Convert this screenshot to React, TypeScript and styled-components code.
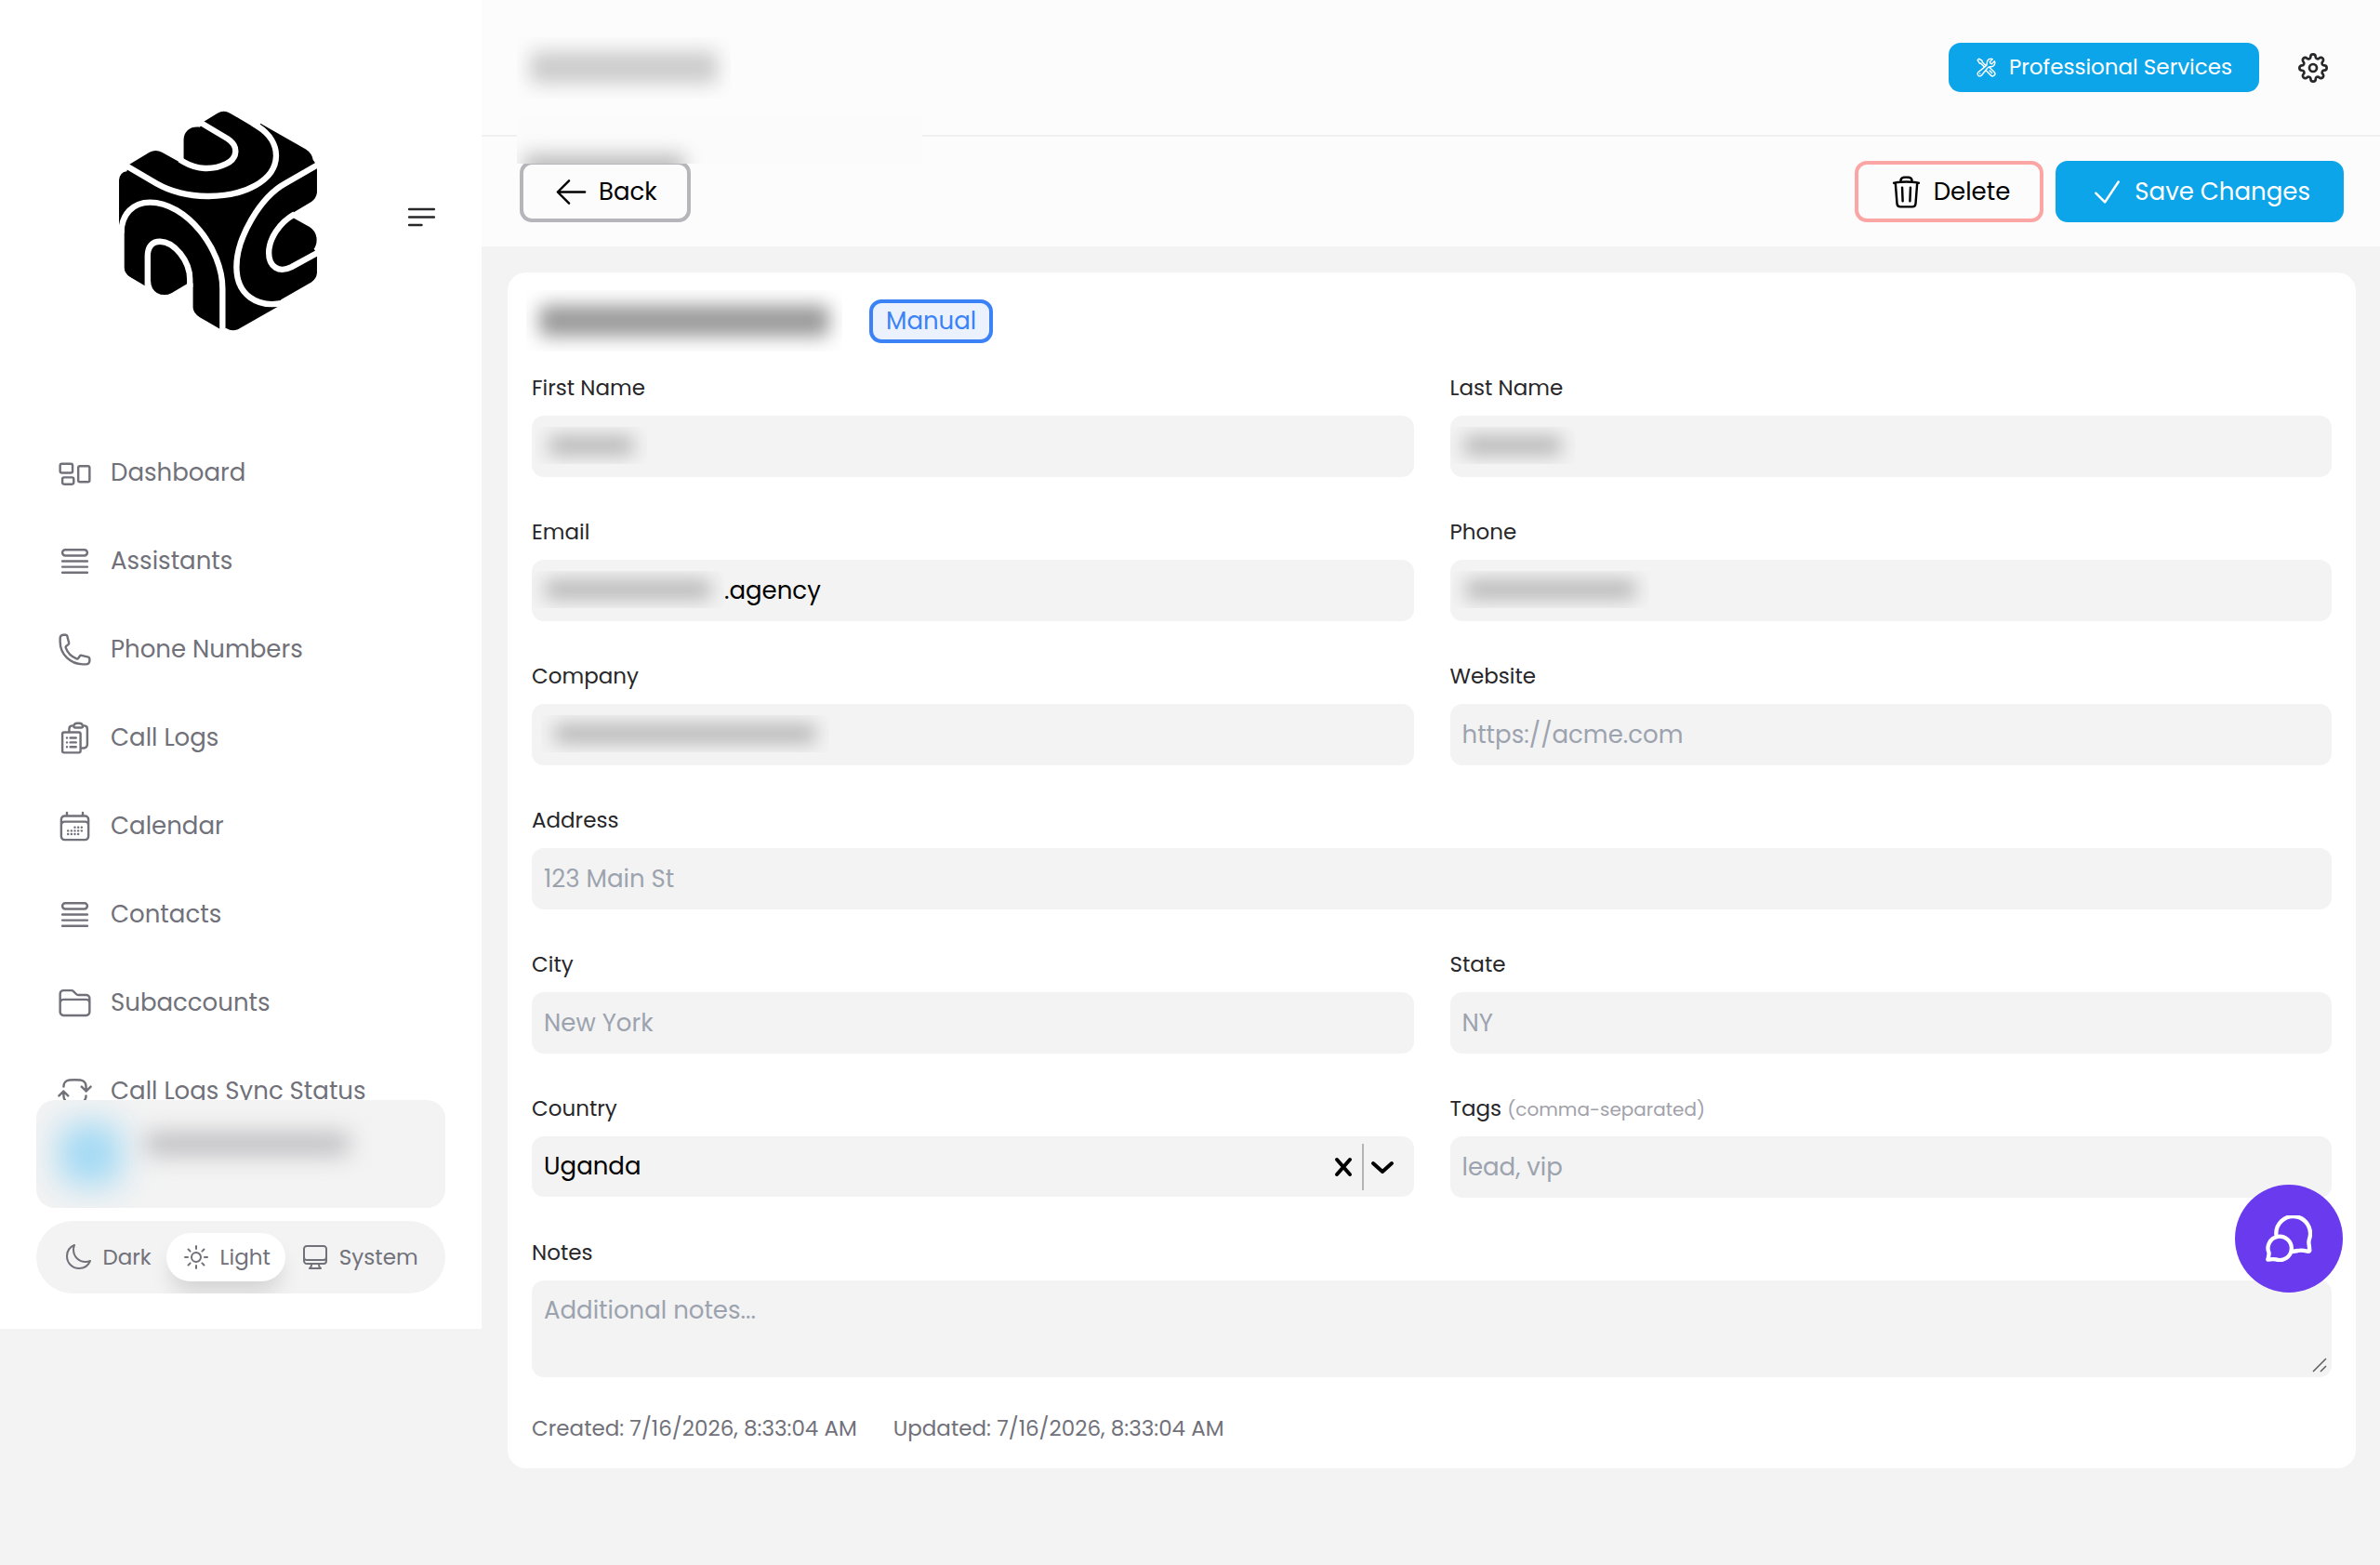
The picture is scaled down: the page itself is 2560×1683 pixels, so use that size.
import React, { useState } from 'react';
import styled, { createGlobalStyle } from 'styled-components';
import {
  HiOutlineArrowLeft,
  HiOutlineArrowPathRoundedSquare,
  HiOutlineBars3BottomLeft,
  HiOutlineCalendarDays,
  HiOutlineCheck,
  HiOutlineClipboardDocumentList,
  HiOutlineComputerDesktop,
  HiOutlineFolder,
  HiOutlineMoon,
  HiOutlinePhone,
  HiOutlineQueueList,
  HiOutlineRectangleGroup,
  HiOutlineSun,
  HiOutlineTrash,
  HiOutlineWrenchScrewdriver,
} from 'react-icons/hi2';
import { FiSettings } from 'react-icons/fi';

const color = {
  page: '#f3f3f3',
  bar: '#fcfcfc',
  white: '#ffffff',
  line: '#f0f0f0',
  text: '#27272a',
  muted: '#71717a',
  faint: '#a1a1aa',
  placeholder: '#9ca3af',
  primary: '#0ca5e9',
  danger: '#fca5a5',
  badge: '#3b82f6',
  chat: '#6a3aef',
};

const GlobalStyle = createGlobalStyle`
  *, *::before, *::after { box-sizing: border-box; }
  body {
    margin: 0;
    background: ${color.page};
    color: ${color.text};
    font-family: Poppins, Inter, sans-serif;
    font-size: 26px;
    line-height: 39px;
  }
  button, input, select, textarea { font: inherit; color: inherit; }
  button { cursor: pointer; }
`;

const Shell = styled.div`
  display: flex;
  align-items: flex-start;
  min-height: 100vh;
`;

/* ---------- sidebar ---------- */

const Sidebar = styled.aside`
  flex: 0 0 518px;
  background: ${color.white};
`;

const SidebarHead = styled.div`
  display: flex;
  align-items: center;
  justify-content: space-between;
  padding: 119px 45px 105px 128px;
`;

const Logo = styled.svg`
  display: block;
  width: 213px;
  height: 237px;
`;

const IconButton = styled.button`
  display: flex;
  padding: 0;
  border: 0;
  background: none;
  color: ${color.text};
`;

const MenuButton = styled(IconButton)`
  padding-bottom: 8px;
`;

const Nav = styled.nav`
  max-height: 722px;
  overflow: hidden;
`;

const NavLink = styled.a`
  display: flex;
  align-items: center;
  gap: 19px;
  height: 95px;
  padding-left: 61px;
  color: ${color.muted};
  text-decoration: none;
`;

const SidebarFoot = styled.div`
  display: grid;
  gap: 14px;
  padding: 0 39px 38px;
`;

const UserCard = styled.div`
  display: flex;
  gap: 26px;
  height: 116px;
  padding: 25px;
  border-radius: 20px;
  background: ${color.page};
  overflow: hidden;
`;

const BlurredAvatar = styled.div`
  width: 66px;
  height: 66px;
  border-radius: 16px;
  background: #9fd8f4;
  filter: blur(18px);
`;

const BlurredName = styled.div`
  width: 220px;
  height: 24px;
  margin-top: 10px;
  border-radius: 8px;
  background: #bdbdc1;
  filter: blur(12px);
`;

const ThemeSwitch = styled.div`
  display: flex;
  align-items: center;
  justify-content: center;
  height: 78px;
  padding: 0 13px;
  border-radius: 39px;
  background: ${color.page};
  overflow: hidden;
`;

const ThemeOption = styled.button<{ $active: boolean }>`
  display: flex;
  align-items: center;
  gap: 10px;
  height: 52px;
  padding: 0 16px;
  border: 0;
  border-radius: 26px;
  background: ${(p) => (p.$active ? color.white : 'transparent')};
  box-shadow: ${(p) => (p.$active ? '0 16px 24px -5px rgba(0, 0, 0, 0.14)' : 'none')};
  color: ${color.muted};
  font-size: 23px;
`;

/* ---------- main column ---------- */

const Main = styled.main`
  flex: 1;
  min-width: 0;
`;

const TopBar = styled.header`
  display: flex;
  align-items: center;
  justify-content: space-between;
  height: 147px;
  padding: 0 56px 0 38px;
  border-bottom: 2px solid ${color.line};
  background: ${color.bar};
`;

const TopActions = styled.div`
  display: flex;
  align-items: center;
  gap: 42px;
`;

const ServicesButton = styled.button`
  display: flex;
  align-items: center;
  gap: 13px;
  height: 53px;
  padding: 0 29px;
  border: 0;
  border-radius: 13px;
  background: ${color.primary};
  color: ${color.white};
  font-size: 23px;
`;

const Toolbar = styled.div`
  position: relative;
  display: flex;
  align-items: center;
  justify-content: space-between;
  height: 118px;
  padding: 0 39px 0 41px;
  background: ${color.bar};
`;

const SubtitleSmudge = styled.div`
  position: absolute;
  left: 38px;
  top: -22px;
  width: 436px;
  height: 51px;
  background: #fbfbfb;
  overflow: hidden;

  &::after {
    content: '';
    position: absolute;
    left: 8px;
    bottom: -16px;
    width: 172px;
    height: 26px;
    background: #bcbcbc;
    filter: blur(10px);
  }
`;

const ButtonGroup = styled.div`
  display: flex;
  gap: 13px;
`;

const ActionButton = styled.button<{ $tone: 'neutral' | 'danger' | 'primary' }>`
  display: flex;
  align-items: center;
  gap: 10px;
  height: 66px;
  padding: 0 32px;
  border: 4px solid
    ${(p) => ({ neutral: '#b5b5ba', danger: color.danger, primary: color.primary })[p.$tone]};
  border-radius: 13px;
  background: ${(p) => (p.$tone === 'primary' ? color.primary : 'transparent')};
  color: ${(p) => (p.$tone === 'primary' ? color.white : '#000000')};
`;

/* ---------- contact card ---------- */

const Card = styled.form`
  position: relative;
  margin: 28px 26px 28px 28px;
  padding: 26px;
  border-radius: 20px;
  background: ${color.white};
`;

const TitleRow = styled.div`
  display: flex;
  align-items: center;
  gap: 29px;
  height: 52px;
  margin-bottom: 29px;
`;

const Badge = styled.span`
  padding: 0 14px;
  border: 4px solid ${color.badge};
  border-radius: 13px;
  background: #ebf2fe;
  color: ${color.badge};
`;

const Grid = styled.div`
  display: grid;
  grid-template-columns: 1fr 1fr;
  gap: 42px 39px;
`;

const FieldBox = styled.div<{ $wide?: boolean }>`
  grid-column: ${(p) => (p.$wide ? '1 / -1' : 'auto')};
  display: flex;
  flex-direction: column;
  gap: 13px;
`;

const Label = styled.label`
  font-size: 23px;
  line-height: 34px;
`;

const Hint = styled.span`
  color: ${color.faint};
  font-size: 20px;
  line-height: 20px;
`;

const InputWrap = styled.div`
  position: relative;
  display: flex;
`;

const Input = styled.input<{ $indent?: number }>`
  width: 100%;
  height: 66px;
  padding: 0 13px 0 ${(p) => p.$indent ?? 13}px;
  border: 0;
  border-radius: 13px;
  background: ${color.page};
  color: #000000;
  &::placeholder { color: ${color.placeholder}; opacity: 1; }
`;

const TextArea = styled.textarea`
  display: block;
  width: 100%;
  height: 104px;
  padding: 13px;
  border: 0;
  border-radius: 13px;
  background: ${color.page};
  color: #000000;
  resize: none;
  &::placeholder { color: ${color.placeholder}; opacity: 1; }
`;

const ResizeGrip = styled.svg`
  position: absolute;
  right: 5px;
  bottom: 5px;
`;

const SelectWrap = styled.div`
  display: flex;
  align-items: center;
  height: 65px;
  padding: 0 18px 0 0;
  border-radius: 13px;
  background: ${color.page};
  color: #000000;
`;

const Select = styled.select`
  flex: 1;
  height: 65px;
  padding: 0 13px;
  border: 0;
  border-radius: 13px;
  background: transparent;
  appearance: none;
`;

const ClearButton = styled.button`
  display: flex;
  padding: 6px 10px;
  border: 0;
  background: none;
`;

const Separator = styled.span`
  width: 2px;
  height: 50px;
  background: #b3b3b8;
`;

const Chevron = styled.svg`
  display: block;
  margin-left: 4px;
`;

const Smudge = styled.span<{ $width: number; $height: number }>`
  display: block;
  position: relative;
  width: ${(p) => p.$width}px;
  height: ${(p) => p.$height}px;
  overflow: hidden;

  &::after {
    content: '';
    position: absolute;
    inset: 24% 14px;
    border-radius: 6px;
    background: var(--ink, #b4b4b4);
    filter: blur(10px);
  }
`;

const Heading = styled.h1`
  margin: 0 0 0 -6px;
  --ink: #9a9a9a;
`;

const PageTitle = styled.div`
  --ink: #cccccc;
`;

const FieldSmudge = styled(Smudge)<{ $left: number }>`
  position: absolute;
  left: ${(p) => p.$left}px;
  top: 12px;
  pointer-events: none;
`;

const Dates = styled.div`
  display: flex;
  gap: 39px;
  margin-top: 38px;
  color: ${color.muted};
  font-size: 23px;
  line-height: 34px;
`;

const ChatButton = styled.button`
  position: absolute;
  right: 14px;
  bottom: 189px;
  display: grid;
  place-items: center;
  width: 116px;
  height: 116px;
  padding: 0;
  border: 0;
  border-radius: 50%;
  background: ${color.chat};
`;

function BrandLogo() {
  return (
    <Logo viewBox="85 57 637 709" role="img" aria-label="Logo">
      <path
        fill="#000"
        d="M115 232 L183 191 Q203 181 223 191 L293 230 V150 C294 120 318 106 345 110 L357 93 L402 65
           Q422 53 442 65 L535 120 L540 98 L686 181 Q706 194 709 215 L722 234 V320 Q720 338 704 350
           L640 388 L648 403 L698 431 Q721 446 721 472 Q721 490 712 502 L722 516 V580 Q720 598 704 609
           L606 665 L604 683 L470 759 Q450 770 430 757 L411 760 L345 722 Q323 708 323 690 V612 L304 614
           L255 643 Q231 656 207 643 Q187 630 187 605 L168 620 L120 592 Q102 580 102 562 V440 H85 V280
           Q88 254 110 252 Z"
      />
      <g fill="none" stroke="#fff" strokeWidth="19">
        <path d="M340 91 L434 147 C470 170 468 210 430 228 C385 250 335 246 295 223 L280 214" />
        <path d="M98 228 L205 291 C300 345 440 345 525 297 C612 248 610 158 532 108 L515 97" />
        <path d="M735 225 L620 291 C540 335 463 465 463 560 C463 650 530 692 612 676" />
        <path d="M735 508 L640 560 C600 580 567 560 567 515 C567 470 600 418 650 390" />
        <path d="M92 452 C92 390 130 352 185 352 C300 352 418 500 418 630 V775" />
        <path d="M177 635 V525 C177 490 195 478 217 478 C262 478 313 540 313 600 V625" />
      </g>
    </Logo>
  );
}

function ChatIcon() {
  return (
    <svg width="50" height="50" viewBox="228 201 150 150" fill="none" stroke="#fff" strokeWidth="13" strokeLinecap="round" strokeLinejoin="round">
      <path d="M262 262 A55 55 0 1 1 369 277 Q366 286 368 296 L370 312 Q371 318 363 317 Q343 312 332 315 L313 318" />
      <path d="M239 323 A38 38 0 1 1 261 343 Q250 341 235 344 Q238 333 239 323 Z" />
    </svg>
  );
}

const navItems = [
  { label: 'Dashboard', Icon: HiOutlineRectangleGroup },
  { label: 'Assistants', Icon: HiOutlineQueueList },
  { label: 'Phone Numbers', Icon: HiOutlinePhone },
  { label: 'Call Logs', Icon: HiOutlineClipboardDocumentList },
  { label: 'Calendar', Icon: HiOutlineCalendarDays },
  { label: 'Contacts', Icon: HiOutlineQueueList },
  { label: 'Subaccounts', Icon: HiOutlineFolder },
  { label: 'Call Logs Sync Status', Icon: HiOutlineArrowPathRoundedSquare },
];

const themes = [
  { label: 'Dark', Icon: HiOutlineMoon },
  { label: 'Light', Icon: HiOutlineSun },
  { label: 'System', Icon: HiOutlineComputerDesktop },
];

type FieldProps = {
  id: string;
  label: string;
  hint?: string;
  wide?: boolean;
  value?: string;
  placeholder?: string;
  indent?: number;
  smudge?: { left: number; width: number };
};

function Field({ id, label, hint, wide, value, placeholder, indent, smudge }: FieldProps) {
  return (
    <FieldBox $wide={wide}>
      <Label htmlFor={id}>
        {label} {hint && <Hint>{hint}</Hint>}
      </Label>
      <InputWrap>
        <Input id={id} defaultValue={value} placeholder={placeholder} $indent={indent} />
        {smudge && <FieldSmudge $left={smudge.left} $width={smudge.width} $height={40} />}
      </InputWrap>
    </FieldBox>
  );
}

export default function App() {
  const [theme, setTheme] = useState('Light');
  const [country, setCountry] = useState('Uganda');

  return (
    <>
      <GlobalStyle />
      <Shell>
        <Sidebar>
          <SidebarHead>
            <BrandLogo />
            <MenuButton type="button" aria-label="Toggle menu">
              <HiOutlineBars3BottomLeft size={39} />
            </MenuButton>
          </SidebarHead>
          <Nav>
            {navItems.map(({ label, Icon }) => (
              <NavLink href="#" key={label}>
                <Icon size={39} />
                {label}
              </NavLink>
            ))}
          </Nav>
          <SidebarFoot>
            <UserCard>
              <BlurredAvatar />
              <BlurredName />
            </UserCard>
            <ThemeSwitch>
              {themes.map(({ label, Icon }) => (
                <ThemeOption key={label} type="button" $active={theme === label} onClick={() => setTheme(label)}>
                  <Icon size={32} />
                  {label}
                </ThemeOption>
              ))}
            </ThemeSwitch>
          </SidebarFoot>
        </Sidebar>

        <Main>
          <TopBar>
            <PageTitle>
              <Smudge $width={230} $height={66} />
            </PageTitle>
            <TopActions>
              <ServicesButton type="button">
                <HiOutlineWrenchScrewdriver size={23} />
                Professional Services
              </ServicesButton>
              <IconButton type="button" aria-label="Settings">
                <FiSettings size={32} />
              </IconButton>
            </TopActions>
          </TopBar>

          <Toolbar>
            <ActionButton type="button" $tone="neutral">
              <HiOutlineArrowLeft size={39} />
              Back
            </ActionButton>
            <SubtitleSmudge />
            <ButtonGroup>
              <ActionButton type="button" $tone="danger">
                <HiOutlineTrash size={39} />
                Delete
              </ActionButton>
              <ActionButton type="submit" form="contact" $tone="primary">
                <HiOutlineCheck size={39} />
                Save Changes
              </ActionButton>
            </ButtonGroup>
          </Toolbar>

          <Card id="contact" onSubmit={(e) => e.preventDefault()}>
            <TitleRow>
              <Heading>
                <Smudge $width={340} $height={66} />
              </Heading>
              <Badge>Manual</Badge>
            </TitleRow>
            <Grid>
              <Field id="first" label="First Name" smudge={{ left: 4, width: 120 }} />
              <Field id="last" label="Last Name" smudge={{ left: 0, width: 134 }} />
              <Field id="email" label="Email" value=".agency" indent={207} smudge={{ left: 0, width: 207 }} />
              <Field id="phone" label="Phone" smudge={{ left: 2, width: 212 }} />
              <Field id="company" label="Company" smudge={{ left: 10, width: 310 }} />
              <Field id="website" label="Website" placeholder="https://acme.com" />
              <Field id="address" label="Address" placeholder="123 Main St" wide />
              <Field id="city" label="City" placeholder="New York" />
              <Field id="state" label="State" placeholder="NY" />
              <FieldBox>
                <Label htmlFor="country">Country</Label>
                <SelectWrap>
                  <Select id="country" value={country} onChange={(e) => setCountry(e.target.value)}>
                    <option value="" />
                    <option value="Uganda">Uganda</option>
                  </Select>
                  <ClearButton type="button" aria-label="Clear country" onClick={() => setCountry('')}>
                    <svg width="20" height="22" viewBox="0 0 20 22" stroke="currentColor" strokeWidth="4" strokeLinecap="round">
                      <path d="M3 3 L17 19 M17 3 L3 19" />
                    </svg>
                  </ClearButton>
                  <Separator />
                  <Chevron width="32" height="32" viewBox="0 0 32 32" fill="none" stroke="currentColor" strokeWidth="4" strokeLinecap="round" strokeLinejoin="round">
                    <path d="M6 12 L16 21 L26 12" />
                  </Chevron>
                </SelectWrap>
              </FieldBox>
              <Field id="tags" label="Tags" hint="(comma-separated)" placeholder="lead, vip" />
              <FieldBox $wide>
                <Label htmlFor="notes">Notes</Label>
                <InputWrap>
                  <TextArea id="notes" placeholder="Additional notes..." />
                  <ResizeGrip width="16" height="16" viewBox="0 0 16 16" stroke="#5c5c5c" strokeWidth="1.5">
                    <path d="M1 15 L15 1 M9 15 L15 9" />
                  </ResizeGrip>
                </InputWrap>
              </FieldBox>
            </Grid>
            <Dates>
              <span>Created: 7/16/2026, 8:33:04 AM</span>
              <span>Updated: 7/16/2026, 8:33:04 AM</span>
            </Dates>
            <ChatButton type="button" aria-label="Open chat">
              <ChatIcon />
            </ChatButton>
          </Card>
        </Main>
      </Shell>
    </>
  );
}
